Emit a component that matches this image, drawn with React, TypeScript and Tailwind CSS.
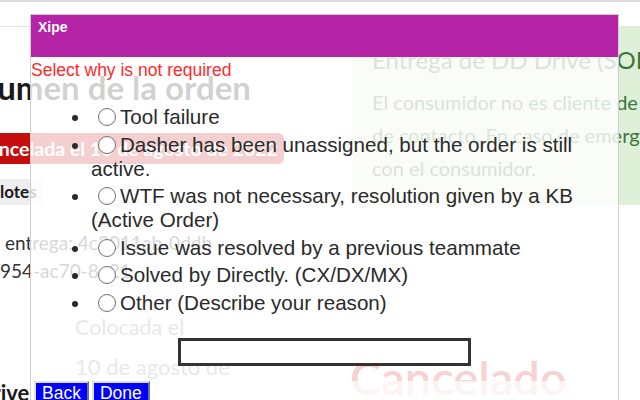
import React from "react";

const REASONS = [
  "Tool failure",
  "Dasher has been unassigned, but the order is still active.",
  "WTF was not necessary, resolution given by a KB (Active Order)",
  "Issue was resolved by a previous teammate",
  "Solved by Directly. (CX/DX/MX)",
  "Other (Describe your reason)",
];

function OrderPage() {
  return (
    <div className="font-['Lato',sans-serif]">
      <div className="h-[2px] bg-[#dddddd]" />
      <div className="h-[25px] border-b border-[#e3e3e3]" />
      <div className="flex">
        <div className="w-[352px] shrink-0">
          <h1 className="-ml-[55px] mt-[40px] whitespace-nowrap text-[33px] font-bold leading-[40px] text-[#191919]">
            Resumen de la orden
          </h1>
          <div className="-ml-[32px] mt-[26px] inline-flex h-[31px] items-center whitespace-nowrap rounded-r-[6px] bg-[#c40d0d] pl-[8px] pr-[6px] text-[19.5px] font-bold text-white">
            Cancelada el 10 de agosto de 2022
          </div>
          <div className="mt-[15px] flex h-[26px] w-[43px] items-center bg-[#eeeeee] text-[17px] font-bold text-[#191919]">
            lotes
          </div>
          <p className="ml-[5px] mt-[25px] whitespace-nowrap text-[19px] leading-[26px] text-[#333]">
            entrega: 4c3011ab-0ddb
          </p>
          <p className="mt-[2px] whitespace-nowrap text-[19px] leading-[26px] text-[#333]">
            954-ac70-8e21
          </p>
          <p className="ml-[75px] mt-[29px] text-[21.5px] leading-[28px] text-[#8a8a8a]">
            Colocada el
          </p>
          <p className="ml-[75px] mt-[12px] whitespace-nowrap text-[22px] leading-[28px] text-[#8a8a8a]">
            10 de agosto de
          </p>
          <p className="-ml-[24px] mt-[-1px] text-[22px] font-bold leading-[26px] text-[#191919]">
            Drive
          </p>
        </div>
        <div className="min-w-0 flex-1">
          <div className="h-[178px] bg-[#dff0d8] pl-[20px] pt-[18px] text-[#3c763d]">
            <p className="whitespace-nowrap text-[24px] leading-[30px]">
              Entrega de DD Drive (SOLO LECTURA)
            </p>
            <p className="mt-[11px] whitespace-nowrap text-[20px] leading-[33px]">
              El consumidor no es cliente de DoorDash
            </p>
            <p className="whitespace-nowrap text-[20px] leading-[33px]">
              de contacto. En caso de emergencia
            </p>
            <p className="whitespace-nowrap text-[20px] leading-[33px]">
              con el consumidor.
            </p>
          </div>
          <p className="-ml-[2px] mt-[142px] whitespace-nowrap text-[47px] font-semibold leading-[60px] text-[#d32020]">
            Cancelado
          </p>
        </div>
      </div>
    </div>
  );
}

function Radio() {
  return (
    <span className="ml-[7px] mr-[4px] inline-block h-[18px] w-[18px] rounded-full border border-[#707070] bg-white align-[-2px]" />
  );
}

function ReasonModal() {
  return (
    <div className="absolute bottom-0 left-[30px] top-[14px] flex w-[589px] flex-col border border-b-0 border-[#cfcfcf] font-['Liberation_Sans',Arial,sans-serif]">
      <div className="h-[42px] shrink-0 bg-[#b523a6] pl-[7px] pt-[2px] text-[14px] font-bold text-white">
        Xipe
      </div>
      <div className="h-[324px] shrink-0 bg-white/80 pt-[3px]">
        <p className="text-[17.5px] leading-[20px] text-[#ff2a2a]">
          Select why is not required
        </p>
        <ul className="mt-[25px] list-disc pl-[60px] pr-[30px] text-[20.6px] leading-[24px] text-[#2a2a2a]">
          {REASONS.map((r) => (
            <li key={r} className="pb-[3.5px]">
              <Radio />
              {r}
            </li>
          ))}
        </ul>
        <div className="mx-auto mt-[20px] h-[28px] w-[293px] border-[3px] border-[#333] bg-white" />
      </div>
      <div className="flex flex-1 gap-[3px] bg-white/95 pl-[3px]">
        {["Back", "Done"].map((b) => (
          <button
            key={b}
            className="h-[24px] border-2 border-t-[#e0e0e0] border-l-[#e0e0e0] border-b-[#777] border-r-[#777] bg-[#0000ff] px-[6px] text-[17.5px] leading-[18px] text-white"
          >
            {b}
          </button>
        ))}
      </div>
    </div>
  );
}

export default function App() {
  return (
    <div className="relative h-[400px] w-[640px] overflow-hidden bg-white">
      <OrderPage />
      <ReasonModal />
    </div>
  );
}
